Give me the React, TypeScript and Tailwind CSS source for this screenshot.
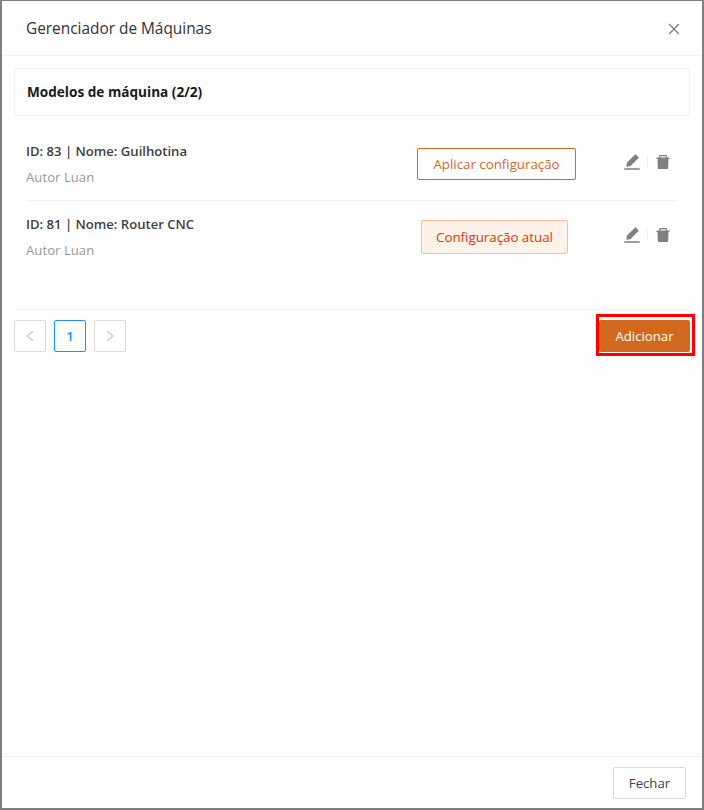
import { AiFillDelete, AiFillEdit, AiOutlineClose, AiOutlineLeft, AiOutlineRight } from "react-icons/ai";

const machines = [
  { id: 83, name: "Guilhotina", current: false },
  { id: 81, name: "Router CNC", current: true },
];

export default function App() {
  return (
    <div className="h-[810px] w-[704px] overflow-hidden bg-[#7f7f7f] pt-px pb-[2px] pl-[2px] pr-[2px] font-['Open_Sans',sans-serif] text-sm text-[#262626]">
      <div className="flex h-full flex-col bg-white">
        <header className="flex h-[55px] shrink-0 items-center justify-between border-b border-[#f0f0f0] pt-[2px] pl-6 pr-[20px]">
          <h1 className="text-[15.4px] font-medium text-[#333333]">Gerenciador de Máquinas</h1>
          <AiOutlineClose className="h-[16px] w-[16px] text-[#808080]" />
        </header>

        <main className="flex-1 px-3 pt-3">
          <div className="flex h-[48px] items-center rounded-[2px] border border-[#f0f0f0] px-3 text-[13.6px] font-bold text-[#1a1a1a]">
            Modelos de máquina (2/2)
          </div>

          <ul className="mx-3 mt-[12px] h-[181px]">
            {machines.map((m, idx) => (
              <li
                key={m.id}
                className={`flex h-[73px] items-start ${idx === 0 ? "border-b border-[#f0f0f0]" : "pt-px"}`}
              >
                <div className={`flex-1 ${idx === 0 ? "pt-[13px]" : "pt-[12px]"}`}>
                  <p className="text-[13.1px] leading-[20px] font-semibold text-[#404040]">
                    ID: {m.id} | Nome: {m.name}
                  </p>
                  <p className="mt-[6px] text-[13.2px] leading-[20px] text-[#999999]">Autor Luan</p>
                </div>
                {m.current ? (
                  <button className="mt-[18px] mr-[54px] h-[34px] w-[147px] rounded-[2px] border border-[#ffbb96] bg-[#fff2e8] text-[13.3px] text-[#d4380d]">
                    Configuração atual
                  </button>
                ) : (
                  <button className="mt-[20px] mr-[46px] h-[32px] w-[159px] rounded-[2px] border border-[#d2691e] bg-white text-[13.3px] text-[#d2691e]">
                    Aplicar configuração
                  </button>
                )}
                <div className={`mr-[6px] flex items-center text-[#808080] ${m.current ? "mt-[23px]" : "mt-[24px]"}`}>
                  <AiFillEdit className="h-[20px] w-[20px]" />
                  <span className="mr-[6px] ml-[5px] h-[14px] w-px bg-[#f0f0f0]" />
                  <AiFillDelete className="h-[18px] w-[18px]" />
                </div>
              </li>
            ))}
          </ul>

          <div className="flex items-start justify-between border-t border-[#f0f0f0] pt-[10px]">
            <div className="flex gap-2">
              <button className="flex h-[32px] w-[32px] items-center justify-center rounded-[2px] border border-[#d9d9d9] text-[#bfbfbf]">
                <AiOutlineLeft className="h-[14px] w-[14px]" />
              </button>
              <button className="h-[32px] w-[32px] rounded-[2px] border border-[#1890ff] text-[13px] font-semibold text-[#1890ff]">
                1
              </button>
              <button className="flex h-[32px] w-[32px] items-center justify-center rounded-[2px] border border-[#d9d9d9] text-[#bfbfbf]">
                <AiOutlineRight className="h-[14px] w-[14px]" />
              </button>
            </div>
            <div className="relative">
              <button className="h-[32px] w-[91px] rounded-[2px] bg-[#d2691e] text-[13.2px] text-white">Adicionar</button>
              <span className="absolute -top-[6px] -right-[5px] -bottom-[4px] -left-[3px] border-[3px] border-[#ff0000]" />
            </div>
          </div>
        </main>

        <footer className="flex h-[52px] shrink-0 items-start justify-end border-t border-[#f0f0f0] pt-[10px] pr-[16px]">
          <button className="h-[32px] w-[73px] rounded-[2px] border border-[#d9d9d9] bg-white text-[13.2px] text-[#404040]">
            Fechar
          </button>
        </footer>
      </div>
    </div>
  );
}
